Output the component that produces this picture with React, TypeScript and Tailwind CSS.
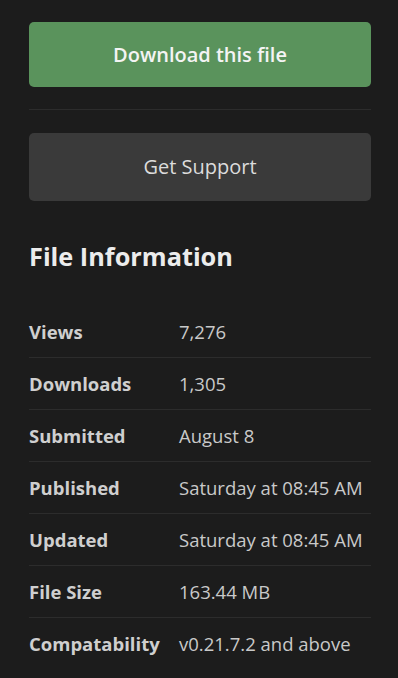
import React from "react";

const rows: [string, string][] = [
  ["Views", "7,276"],
  ["Downloads", "1,305"],
  ["Submitted", "August 8"],
  ["Published", "Saturday at 08:45 AM"],
  ["Updated", "Saturday at 08:45 AM"],
  ["File Size", "163.44 MB"],
  ["Compatability", "v0.21.7.2 and above"],
];

export default function App() {
  return (
    <div
      className="min-h-[678px] w-[398px] bg-[#1c1c1c] pl-[29px] pr-[27px] pt-[22px]"
      style={{ fontFamily: '"Open Sans", "Noto Sans", sans-serif' }}
    >
      <button className="flex h-[65px] w-full items-center justify-center rounded-[5px] bg-[#5a935c] text-[20px] font-semibold text-[#f4f4f4]">
        Download this file
      </button>
      <div className="mt-[22px] h-px w-full bg-[#2c2c2c]" />
      <button className="mt-[23px] flex h-[68px] w-full items-center justify-center rounded-[5px] bg-[#3a3a3a] text-[20px] text-[#dcdcdc]">
        Get Support
      </button>
      <h2 className="mt-[37px] text-[25.3px] font-bold leading-[36px] text-[#ececec]">
        File Information
      </h2>
      <div className="mt-[32px]">
        {rows.map(([k, v], i) => (
          <div
            key={k}
            className={
              "flex h-[52px] items-center " +
              (i < rows.length - 1 ? "border-b border-[#2c2c2c]" : "")
            }
          >
            <div className="w-[150px] text-[18.5px] font-bold text-[#cfcfcf]">{k}</div>
            <div className="text-[18.5px] text-[#c9c9c9]">{v}</div>
          </div>
        ))}
      </div>
    </div>
  );
}
